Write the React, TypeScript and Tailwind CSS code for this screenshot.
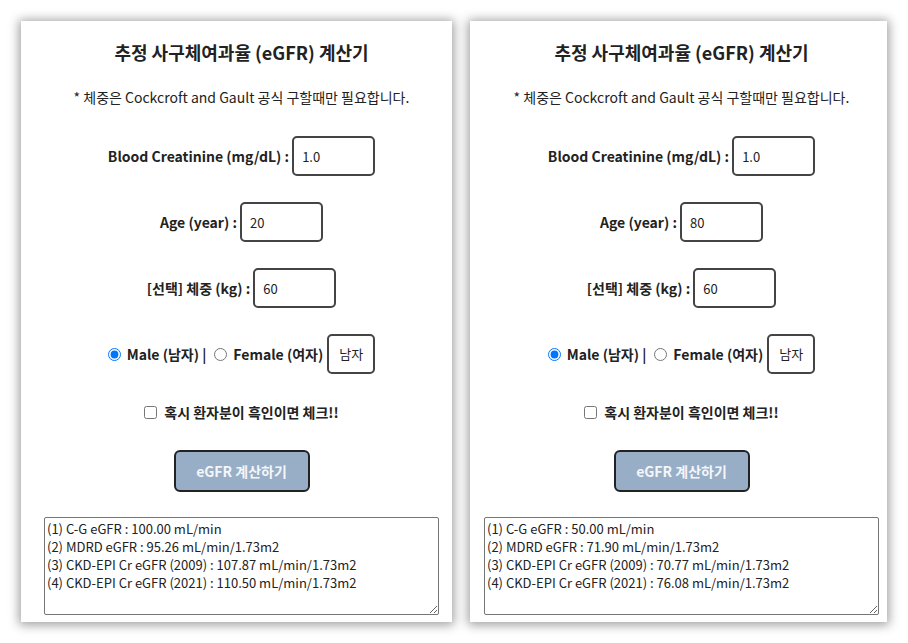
import React from "react";

type CardProps = {
  width: string;
  pad: string;
  age: string;
  results: string;
};

const font = { fontFamily: '"Noto Sans CJK KR", "Noto Sans", sans-serif' };

function Field({ label, value }: { label: string; value: string }) {
  return (
    <div className="flex items-center gap-[3px]">
      <span className="text-[14px] font-bold text-[#222]">{label}</span>
      <input
        className="h-[40px] w-[83px] rounded-[5px] border-2 border-[#444] bg-white pl-[8px] text-[13px] text-[#222] outline-none"
        defaultValue={value}
        style={font}
      />
    </div>
  );
}

function Card({ width, pad, age, results }: CardProps) {
  return (
    <div
      className={`flex h-[601px] flex-col items-center bg-white pt-[18px] shadow-[0_1px_10px_2px_rgba(0,0,0,0.38)] ${width} ${pad}`}
    >
      <h1 className="h-[26px] text-[18px] font-bold leading-[26px] text-[#222]">
        추정 사구체여과율 (eGFR) 계산기
      </h1>
      <p className="mt-[22px] h-[20px] text-[14px] leading-[20px] text-[#222]">
        * 체중은 Cockcroft and Gault 공식 구할때만 필요합니다.
      </p>
      <div className="mt-[29px]">
        <Field label="Blood Creatinine (mg/dL) :" value="1.0" />
      </div>
      <div className="mt-[26px]">
        <Field label="Age (year) :" value={age} />
      </div>
      <div className="mt-[26px]">
        <Field label="[선택] 체중 (kg) :" value="60" />
      </div>
      <div className="mt-[26px] flex items-center text-[14px] font-bold text-[#222]">
        <input type="radio" name={`g${age}`} defaultChecked className="m-0 h-[13px] w-[13px]" />
        <span className="ml-[6px]">Male (남자) |</span>
        <input type="radio" name={`g${age}`} className="m-0 ml-[8px] h-[13px] w-[13px]" />
        <span className="ml-[6px]">Female (여자)</span>
        <div className="ml-[4px] flex h-[40px] w-[48px] items-center justify-center rounded-[5px] border-2 border-[#444] text-[13px] font-normal">
          남자
        </div>
      </div>
      <div className="mt-[28px] flex h-[20px] items-center text-[14px] font-bold text-[#222]">
        <input type="checkbox" className="m-0 h-[13px] w-[13px]" />
        <span className="ml-[7px]">혹시 환자분이 흑인이면 체크!!</span>
      </div>
      <button
        className="mt-[28px] h-[42px] w-[136px] rounded-[6px] border-2 border-[#222] bg-[#97aec6] text-[14px] font-bold text-[#f4f6f9]"
        style={font}
      >
        eGFR 계산하기
      </button>
      <textarea
        className="mt-[25px] h-[98px] w-[395px] rounded-[2px] border border-[#767676] px-[2px] py-[2px] text-[13px] leading-[18px] text-[#222] outline-none"
        style={font}
        readOnly
        defaultValue={results}
      />
    </div>
  );
}

export default function App() {
  return (
    <div className="min-h-[643px] w-[908px] bg-white" style={font}>
      <div className="flex gap-[18px] pl-[21px] pt-[21px]">
        <Card
          width="w-[431px]"
          pad="pl-[23px] pr-[13px]"
          age="20"
          results={
            "(1) C-G eGFR : 100.00 mL/min\n(2) MDRD eGFR : 95.26 mL/min/1.73m2\n(3) CKD-EPI Cr eGFR (2009) : 107.87 mL/min/1.73m2\n(4) CKD-EPI Cr eGFR (2021) : 110.50 mL/min/1.73m2"
          }
        />
        <Card
          width="w-[417px]"
          pad="pl-[14px] pr-[8px]"
          age="80"
          results={
            "(1) C-G eGFR : 50.00 mL/min\n(2) MDRD eGFR : 71.90 mL/min/1.73m2\n(3) CKD-EPI Cr eGFR (2009) : 70.77 mL/min/1.73m2\n(4) CKD-EPI Cr eGFR (2021) : 76.08 mL/min/1.73m2"
          }
        />
      </div>
    </div>
  );
}
